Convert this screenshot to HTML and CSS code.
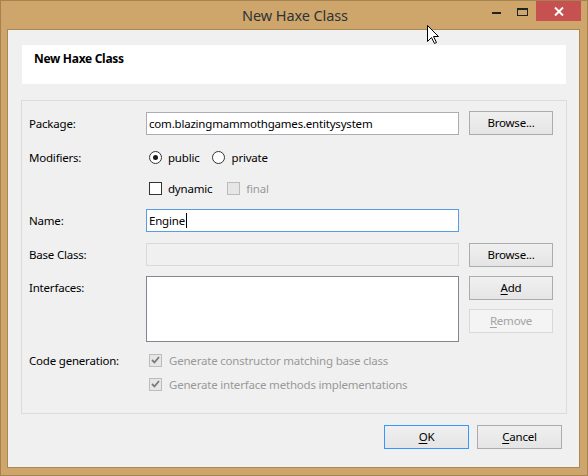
FILE: index.html
```html
<!DOCTYPE html>
<html>
<head>
<meta charset="utf-8">
<link rel="stylesheet" href="styles.css">
</head>
<body>
<div class="window">
  <div class="titlebar">
    <div class="title">New Haxe Class</div>
    <div class="controls">
      <div class="ctl ctl-min"><span class="min-bar"></span></div>
      <div class="ctl ctl-max"><span class="max-box"></span></div>
      <div class="ctl ctl-close">
        <svg width="10" height="9" viewBox="0 0 10 9"><path d="M1 0.5 L9 8.5 M9 0.5 L1 8.5" stroke="#fff" stroke-width="2"/></svg>
      </div>
    </div>
  </div>
  <div class="client">
    <div class="header"><span class="header-title">New Haxe Class</span></div>
    <div class="group">
      <div class="row row-package">
        <div class="label">Package:</div>
        <div class="field"><div class="input">com.blazingmammothgames.entitysystem</div></div>
        <div class="side"><div class="btn">Browse...</div></div>
      </div>
      <div class="row row-mod">
        <div class="label">Modifiers:</div>
        <div class="field options">
          <span class="opt opt-public"><span class="radio checked"></span>public</span>
          <span class="opt"><span class="radio"></span>private</span>
        </div>
      </div>
      <div class="row row-dyn">
        <div class="label"></div>
        <div class="field options">
          <span class="opt opt-dynamic"><span class="check"></span>dynamic</span>
          <span class="opt disabled"><span class="check check-disabled"></span>final</span>
        </div>
      </div>
      <div class="row row-name">
        <div class="label">Name:</div>
        <div class="field"><div class="input input-focus">Engine<span class="caret"></span></div></div>
      </div>
      <div class="row row-base">
        <div class="label">Base Class:</div>
        <div class="field"><div class="input input-disabled"></div></div>
        <div class="side"><div class="btn">Browse...</div></div>
      </div>
      <div class="row row-ifaces">
        <div class="label label-top">Interfaces:</div>
        <div class="field"><div class="listbox"></div></div>
        <div class="side side-col">
          <div class="btn"><u>A</u>dd</div>
          <div class="btn btn-disabled"><u>R</u>emove</div>
        </div>
      </div>
      <div class="row row-gen1">
        <div class="label">Code generation:</div>
        <div class="field options">
          <span class="opt disabled"><span class="check check-disabled checked-gray"><svg width="9" height="8" viewBox="0 0 9 8"><path d="M1 4 L3.5 6.5 L8 1" stroke="#7a7a7a" stroke-width="1.8" fill="none"/></svg></span>Generate constructor matching base class</span>
        </div>
      </div>
      <div class="row row-gen2">
        <div class="label"></div>
        <div class="field options">
          <span class="opt disabled"><span class="check check-disabled checked-gray"><svg width="9" height="8" viewBox="0 0 9 8"><path d="M1 4 L3.5 6.5 L8 1" stroke="#7a7a7a" stroke-width="1.8" fill="none"/></svg></span>Generate interface methods implementations</span>
        </div>
      </div>
    </div>
    <div class="footer">
      <div class="btn btn-default"><u>O</u>K</div>
      <div class="btn"><u>C</u>ancel</div>
    </div>
  </div>
  <svg class="cursor" width="13" height="20" viewBox="0 0 13 20"><path d="M0.5 0.5 V16.5 L4.5 12.5 L7.5 18.5 L9.5 17.5 L6.5 11.5 H11.5 Z" fill="#fff" stroke="#000" stroke-width="1" stroke-linejoin="miter"/></svg>
</div>
</body>
</html>
```

FILE: styles.css
```css
* { box-sizing: border-box; }
html, body { margin: 0; padding: 0; background: #cea66b; }
body { font-family: "Noto Sans", "Open Sans", sans-serif; font-size: 11.5px; letter-spacing: -0.2px; color: #000; }

.window {
  position: relative;
  width: 588px;
  height: 476px;
  background: #cea66b;
  border: 1px solid #a5834f;
  display: flex;
  flex-direction: column;
}

.titlebar {
  height: 28px;
  display: flex;
  position: relative;
  flex: none;
}
.title {
  flex: 1;
  text-align: center;
  font-size: 14.5px;
  letter-spacing: -0.1px;
  line-height: 28px;
  color: #2e3338;
  padding-left: 2px;
}
.controls {
  position: absolute;
  right: 6px;
  top: 0;
  display: flex;
}
.ctl { height: 20px; display: flex; align-items: center; justify-content: center; }
.ctl-min { width: 26px; }
.ctl-max { width: 27px; }
.ctl-close { width: 45px; background: #c75050; }
.min-bar { width: 9px; height: 2px; background: #222; margin-top: 4px; }
.max-box { width: 11px; height: 8px; border: 1px solid #222; border-top-width: 2px; margin-top: 2px; }

.client {
  margin: 0 7px 0 6px;
  height: 439px;
  border: 1px solid #a88753;
  background: #f0f0f0;
  display: flex;
  flex-direction: column;
}

.header {
  margin: 15px 13px 0 14px;
  height: 39px;
  background: #fff;
  padding: 5px 0 0 12px;
}
.header-title { font-weight: bold; font-size: 12px; letter-spacing: -0.3px; }

.group {
  margin: 16px 12px 0 13px;
  height: 314px;
  border: 1px solid #dcdcdc;
  padding: 10px 0 0 7px;
}

.row { display: flex; align-items: center; height: 24px; }
.row-mod { margin-top: 10px; }
.row-dyn { margin-top: 7px; }
.row-name { margin-top: 8px; height: 25px; }
.row-base { margin-top: 9px; height: 25px; }
.row-ifaces { margin-top: 9px; height: 66px; align-items: flex-start; }
.row-gen1 { margin-top: 6px; }

.label { width: 117px; flex: none; }
.label-top { padding-top: 4px; }
.field { width: 313px; flex: none; }
.side { width: 84px; margin-left: 10px; flex: none; }
.side-col { display: flex; flex-direction: column; gap: 9px; }

.input {
  height: 23px;
  border: 1px solid #abadb3;
  background: #fff;
  padding: 0 2px;
  line-height: 21px;
  white-space: nowrap;
}
.input-focus { border-color: #569de5; }
.input-disabled { border-color: #d9d9d9; background: #f0f0f0; }
.caret { display: inline-block; width: 1px; height: 15px; background: #000; vertical-align: middle; margin-top: -2px; margin-left: 1px; }

.listbox { height: 66px; border: 1px solid #828790; background: #fff; }

.btn {
  height: 24px;
  border: 1px solid #acacac;
  background: linear-gradient(#f0f0f0, #e5e5e5);
  text-align: center;
  line-height: 22px;
  width: 84px;
}
.btn u { text-decoration: underline; text-underline-offset: 2px; }
.btn-disabled { border-color: #d9d9d9; background: #f4f4f4; color: #a3a3a3; }
.btn-default { border-color: #3399ff; }

.options { display: flex; align-items: center; padding-left: 3px; }
.opt { display: flex; align-items: center; }
.opt-public { margin-right: 12px; }
.opt-public .radio + * { }
.opt-dynamic { margin-right: 15px; }
.disabled { color: #999; }

.radio {
  width: 13px; height: 13px; border-radius: 50%;
  border: 1px solid #333; background: #fff;
  margin-right: 6px; position: relative; flex: none;
}
.radio.checked::after {
  content: ""; position: absolute; left: 3px; top: 3px;
  width: 5px; height: 5px; border-radius: 50%; background: #1a1a1a;
}
.check {
  width: 13px; height: 13px; border: 1px solid #333; background: #fff;
  margin-right: 6px; flex: none;
  display: flex; align-items: center; justify-content: center;
}
.check-disabled { border-color: #bcbcbc; background: #e6e6e6; }
.checked-gray { margin-right: 7px; }
.opt .radio:not(.checked) { margin-right: 7px; }

.footer {
  display: flex;
  justify-content: flex-end;
  gap: 8px;
  margin-top: 11px;
  padding-right: 17px;
}
.footer .btn { width: 85px; }

.cursor { position: absolute; left: 426px; top: 24px; }
```
